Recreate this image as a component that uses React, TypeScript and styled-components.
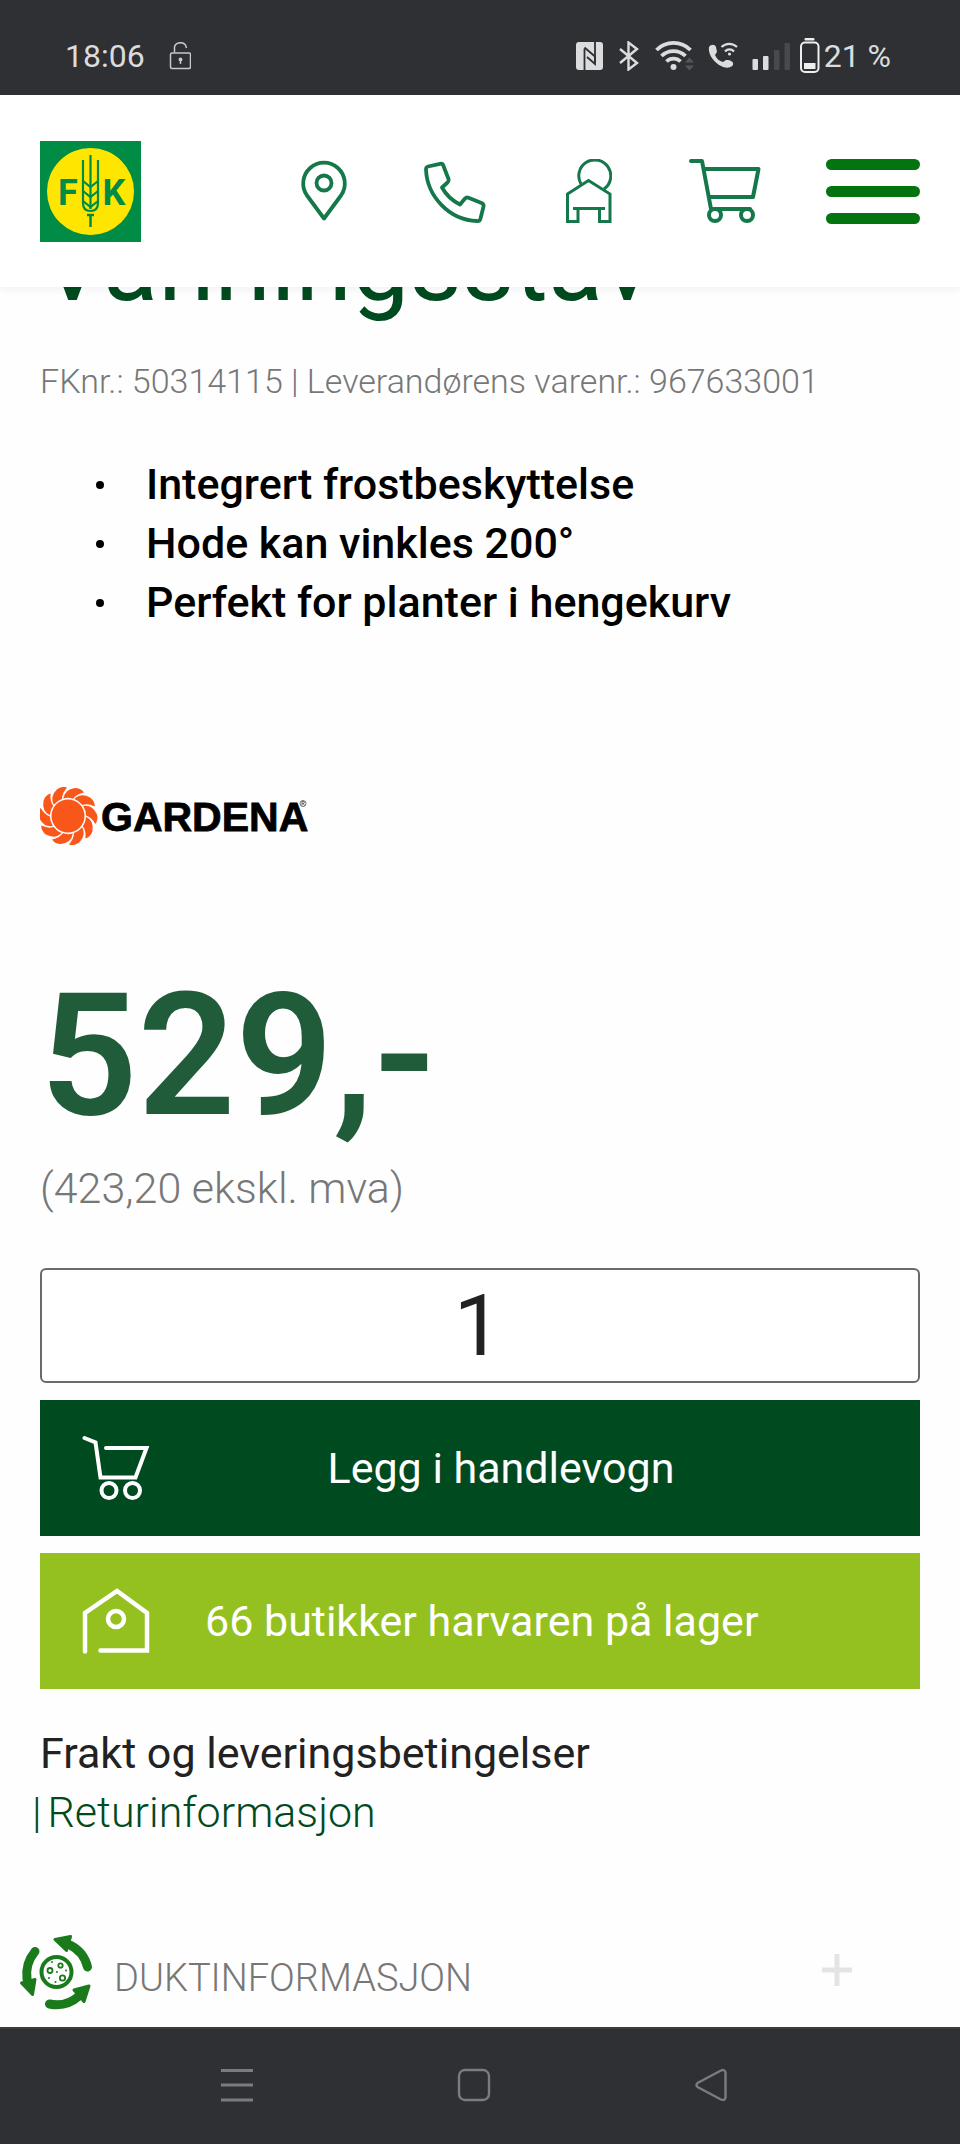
import React from "react";
import styled, { createGlobalStyle } from "styled-components";

const GlobalStyle = createGlobalStyle`
  *, *::before, *::after { box-sizing: border-box; }
  body {
    margin: 0;
    background: #fefefe;
    font-family: Roboto, "Liberation Sans", sans-serif;
    color: #222;
  }
  svg { display: block; flex: none; }
  button { border: 0; padding: 0; background: none; font: inherit; color: inherit; cursor: pointer; }
  a { color: inherit; text-decoration: none; }
`;

const Page = styled.div`
  display: flex;
  flex-direction: column;
  min-height: 100vh;
`;

const StatusBar = styled.div`
  position: relative;
  z-index: 2;
  display: flex;
  align-items: center;
  justify-content: space-between;
  height: 95px;
  padding: 17px 69px 0 65px;
  background: #2f3034;
  color: #dcdcde;
  font-size: 32px;
  line-height: 38px;
`;

const StatusGroup = styled.div<{ $gap: number }>`
  display: flex;
  align-items: center;
  gap: ${(p) => p.$gap}px;
`;

const Battery = styled.div`
  display: flex;
  align-items: center;
  gap: 4px;
  white-space: nowrap;
`;

const Header = styled.header`
  position: relative;
  z-index: 1;
  display: flex;
  align-items: center;
  justify-content: space-between;
  height: 192px;
  padding: 0 40px;
  background: #fff;
  box-shadow: 0 2px 8px rgba(0, 0, 0, 0.06);
`;

const HeaderNav = styled.nav`
  display: flex;
  align-items: center;
  gap: 64px;
`;

const HeaderLinks = styled.div`
  display: flex;
  align-items: center;
  gap: 76px;
`;

const MenuButton = styled.button`
  display: flex;
  flex-direction: column;
  gap: 16px;
  width: 94px;
`;

const MenuBar = styled.span`
  height: 11px;
  border-radius: 6px;
  background: #03740f;
`;

const Main = styled.main`
  flex: 1;
  padding: 0 40px;
`;

/* The heading is scrolled partly under the header. */
const Title = styled.h1`
  margin: -82px 0 0;
  font-size: 102px;
  line-height: 120px;
  font-weight: 400;
  color: #004a1f;
`;

const ProductNumbers = styled.p`
  margin: 36px 0 0;
  font-size: 34px;
  line-height: 40px;
  font-weight: 300;
  color: #777;
`;

const Features = styled.ul`
  margin: 54px 0 0;
  padding: 0 0 0 56px;
  list-style: none;
  font-size: 43px;
  line-height: 59px;
  font-weight: 500;
  color: #000;
`;

const Feature = styled.li`
  display: flex;
  align-items: center;
  gap: 42px;
  &::before {
    content: "";
    width: 8px;
    height: 8px;
    border-radius: 50%;
    background: #000;
  }
`;

const Brand = styled.div`
  margin-top: 155px;
`;

const Price = styled.p`
  margin: 126px 0 0;
  font-size: 171px;
  line-height: 170px;
  font-weight: 600;
  color: #205c3a;
`;

const PriceNote = styled.p`
  margin: 22px 0 0;
  font-size: 43px;
  line-height: 50px;
  font-weight: 300;
  color: #777;
`;

const OrderForm = styled.form`
  display: flex;
  flex-direction: column;
  gap: 17px;
  margin-top: 55px;
`;

const Quantity = styled.input`
  width: 100%;
  height: 115px;
  padding: 0 4px 0 0;
  border: 2px solid #6a6a6a;
  border-radius: 6px;
  background: #fff;
  font-family: inherit;
  font-size: 86px;
  line-height: 100px;
  text-align: center;
  color: #222;
  outline: none;
`;

const ActionButton = styled.button<{ $color: string }>`
  display: flex;
  align-items: center;
  width: 100%;
  height: 136px;
  padding: 0 80px 0 42px;
  background: ${(p) => p.$color};
  color: #fff;
  font-size: 43px;
  line-height: 50px;
`;

const ActionLabel = styled.span<{ $align: "center" | "left" }>`
  flex: 1;
  padding-left: ${(p) => (p.$align === "left" ? 55 : 12)}px;
  text-align: ${(p) => p.$align};
`;

const Links = styled.div`
  display: flex;
  flex-direction: column;
  align-items: flex-start;
  margin-top: 35px;
  font-size: 43px;
  line-height: 59px;
`;

const ReturnRow = styled.div`
  display: flex;
  gap: 6px;
  margin-left: -8px;
  font-weight: 300;
  color: #004a1f;
`;

const Accordion = styled.section`
  display: flex;
  align-items: center;
  gap: 20px;
  margin: 93px 0 16px -22px;
`;

const AccordionToggle = styled.button`
  flex: 1;
  display: flex;
  align-items: center;
  justify-content: space-between;
  padding: 0 68px 7px 0;
  color: #777;
  font-size: 38px;
  line-height: 44px;
  font-weight: 300;
`;

const AccordionTitle = styled.span`
  padding-top: 16px;
`;

const SystemNav = styled.nav`
  display: grid;
  grid-template-columns: repeat(3, 1fr);
  align-items: center;
  height: 117px;
  padding: 0 130px 3px 118px;
  border-top: 2px solid #3b3d35;
  background: #2f3034;
`;

const SystemButton = styled.button`
  display: flex;
  justify-content: center;
`;

const green = "#14784a";
const light = "#dcdcde";

const LockIcon = () => (
  <svg width="22" height="28" viewBox="169 42 22 28" fill="none" stroke="#c8c8ca" strokeWidth="1.5">
    <path d="M174.500 52v-4a6 5 0 0 1 11 -3l1 3" />
    <rect x="170.500" y="53" width="20" height="15.500" rx="1.500" />
    <circle cx="180.500" cy="59.500" r="1.200" fill={light} />
    <path d="M180.500 60v4" />
  </svg>
);

const NfcIcon = () => (
  <svg width="33" height="30" viewBox="576 40 33 30">
    <rect x="576" y="41" width="27" height="28" rx="3" fill={light} />
    <path d="M584.500 69V47.500M595 41V62" fill="none" stroke="#2f3034" strokeWidth="1.800" />
    <path d="M584.500 46.500L595 55.500V63L587 56" fill="none" stroke="#2f3034" strokeWidth="1.800" />
  </svg>
);

const BluetoothIcon = () => (
  <svg width="26" height="30" viewBox="619 40 26 30" fill="none" stroke={light} strokeWidth="2.400">
    <path d="M620 48l17 14l-8.500 6.500v-27l8.500 6.500l-17 14" />
  </svg>
);

const WifiIcon = () => (
  <svg width="43" height="30" viewBox="655 40 43 30" fill="none" stroke={light} strokeWidth="3.800">
    <path d="M656.500 49a24 24 0 0 1 34 0M661.500 55a17 17 0 0 1 24 0M666.500 60.500a10 10 0 0 1 14 0" />
    <circle cx="673.500" cy="66" r="3" fill={light} stroke="none" />
    <path d="M685 61.500l4.500-5l4.500 5zM685 64.500h9l-4.500 5z" fill="#55565a" stroke="none" />
  </svg>
);

const CallIcon = () => (
  <svg width="34" height="30" viewBox="708 40 34 30" fill="none" stroke={light}>
    <path
      d="M709 46c2-3 6-3 7 0l1 5l-2 3c2 4 4 6 8 7l3-2c5 0 8 2 7 5c-3 4-9 3-14 0c-7-5-11-12-10-18z"
      fill={light}
      stroke="none"
    />
    <path d="M721.500 46a11 11 0 0 1 15.500 0M725 50.500a6 6 0 0 1 9 0" strokeWidth="2.200" />
    <circle cx="729.500" cy="53" r="1.600" fill={light} stroke="none" />
  </svg>
);

const SignalIcon = () => (
  <svg width="38" height="30" viewBox="752 40 38 30">
    <rect x="752.500" y="58" width="5.500" height="11" rx="1" fill={light} />
    <rect x="763" y="55" width="5.500" height="14" rx="1" fill={light} />
    <rect x="774" y="49" width="5.500" height="20" rx="1" fill="#48494d" />
    <rect x="784.500" y="42" width="5.500" height="27" rx="1" fill="#48494d" />
  </svg>
);

const BatteryIcon = () => (
  <svg width="20" height="36" viewBox="800 37 20 36">
    <rect x="804.500" y="37" width="10" height="2.500" rx="1" fill="#eee" />
    <rect x="801" y="41.500" width="17.500" height="29.500" rx="4" fill="none" stroke="#eee" strokeWidth="2" />
    <rect x="804" y="62" width="11.500" height="6" fill="#eee" />
  </svg>
);

const FkLogo = () => (
  <svg width="101" height="101" viewBox="0 0 101 101">
    <rect width="101" height="101" fill="#008c44" />
    <circle cx="50.500" cy="50.500" r="43.500" fill="#ffe600" />
    <g fill="#008c44" fontFamily="Roboto, sans-serif" fontWeight="700" fontSize="36">
      <text x="18" y="63.500">F</text>
      <text x="62.500" y="63.500">K</text>
    </g>
    <g fill="none" stroke="#008c44" strokeWidth="2.200">
      <path d="M50.500 14v54M43 19v43q0 8 7.500 8t7.500-8V19" />
      <path d="M43 40l7.500 6l7.500-6M43 50l7.500 6l7.500-6M43 60l7.500 6l7.500-6" />
      <path d="M47 74h7M50.500 74v12" strokeWidth="2.500" />
    </g>
  </svg>
);

const PinIcon = () => (
  <svg width="48" height="64" viewBox="300 159 48 64" fill="none" stroke={green} strokeWidth="3.800" strokeLinejoin="round">
    <path d="M324 218.500L307 195.500A20.800 20.800 0 1 1 341 195.500Z" />
    <circle cx="324" cy="183" r="7.500" />
  </svg>
);

const PhoneIcon = () => (
  <svg width="64" height="64" viewBox="424 159 64 64" fill="none" stroke={green} strokeWidth="3.800" strokeLinejoin="round">
    <path d="M428 166.500L440 163.800Q442.500 163.200 443.300 165.500L448.500 179Q449 181 447.500 182.500L442 187.500Q448 198.500 460 204.500L465 198.500Q466.500 197 468.500 197.800L481.500 203Q484 204 483.500 206.500L480.500 218.500Q480 221.500 477 221C449 220 427 196 426 169.500Q426 167 428 166.500Z" />
  </svg>
);

const BarnIcon = () => (
  <svg width="48" height="64" viewBox="564 159 48 64" fill="none" stroke={green} strokeWidth="3">
    <path d="M581 184A16 16 0 1 1 604 189" />
    <path d="M567.500 194L588.500 180.500L610 194V221.500H599.500V208.500H578V221.500H567.500ZM573 208.500H605" />
  </svg>
);

const CartIcon = () => (
  <svg width="74" height="64" viewBox="688 159 74 64" fill="none" stroke={green} strokeWidth="4" strokeLinecap="round" strokeLinejoin="round">
    <path d="M691 161h11l9 48M704.500 169H758.500L753 197H710M711 209H750" />
    <circle cx="715" cy="215" r="6" />
    <circle cx="747" cy="215" r="6" />
  </svg>
);

const petals = Array.from({ length: 10 }, (_, i) => i * 36);

const GardenaLogo = () => (
  <svg width="270" height="58" viewBox="40 787 270 58" role="img" aria-label="Gardena">
    <g transform="translate(68 816)" fill="#f9561a">
      <circle r="16.500" />
      {petals.map((angle) => (
        <path
          key={angle}
          transform={`rotate(${angle})`}
          d="M-4.800 -17.500Q-3.500 -26.500 7 -28Q13 -28 16 -23.500Q8.500 -22 5.200 -17.300A18 18 0 0 0 -4.800 -17.500Z"
        />
      ))}
    </g>
    <text x="101" y="831" fontFamily="'Liberation Sans', Arial, sans-serif" fontWeight="700" fontSize="41" fill="#000" stroke="#000" strokeWidth="0.800">
      GARDENA
    </text>
    <g fill="none" stroke="#333" strokeWidth="0.700">
      <circle cx="303" cy="803.500" r="3" />
      <path d="M302 805.500v-4h1.300a1 1 0 0 1 0 2h-1.300m1.300 0l1.200 2" />
    </g>
  </svg>
);

const ButtonCartIcon = () => (
  <svg width="68" height="68" viewBox="82 1434 68 68" fill="none" stroke="#fff" strokeWidth="4" strokeLinecap="round">
    <path d="M84.500 1438L95.500 1442.500L100.500 1477.500H135.500L146.500 1448H106" />
    <circle cx="109" cy="1490.500" r="7.500" />
    <circle cx="132.500" cy="1490.500" r="7.500" />
  </svg>
);

const StoreIcon = () => (
  <svg width="68" height="68" viewBox="82 1587 68 68" fill="none" stroke="#fff" strokeWidth="4.500" strokeLinecap="round">
    <path d="M85 1651.500V1613L117 1591L147 1613V1650.500H100.500" />
    <circle cx="116" cy="1619" r="8" />
  </svg>
);

const CookieIcon = () => (
  <svg width="76" height="76" viewBox="18 1935 76 76" fill="#1b7a1b" stroke="#1b7a1b">
    <g fill="none" strokeWidth="9" strokeLinecap="round">
      <path d="M87.500 1967A33 33 0 0 0 70 1945" />
      <path d="M35 1951.500A36 36 0 0 0 27 1979" />
      <path d="M49.500 2004A34 34 0 0 0 79 1996" />
    </g>
    <g strokeWidth="3" strokeLinejoin="round">
      <path d="M55 1939.500L70.500 1936.500L66.500 1950.500Z" />
      <path d="M21.500 1983L35 1979.500L32.500 1994.500Z" />
      <path d="M89 1986L74 1990L84 2001.500Z" />
    </g>
    <circle cx="56.500" cy="1972" r="15" fill="none" strokeWidth="4" />
    <g fill="none" strokeWidth="1.800">
      <circle cx="50" cy="1970.500" r="2.500" />
      <circle cx="60.500" cy="1965.500" r="2.200" />
      <circle cx="62.500" cy="1978" r="2.700" />
    </g>
    <g stroke="none">
      <circle cx="52" cy="1962" r="1" />
      <circle cx="57" cy="1972" r="1" />
      <circle cx="66" cy="1970.500" r="1" />
      <circle cx="49" cy="1978" r="1" />
      <circle cx="55.500" cy="1982" r="1" />
    </g>
  </svg>
);

const PlusIcon = () => (
  <svg width="30" height="32" viewBox="0 0 30 32" fill="none" stroke="#e4e4e4" strokeWidth="5">
    <path d="M15 0V32M0 16H30" />
  </svg>
);

const RecentsIcon = () => (
  <svg width="34" height="34" viewBox="0 0 34 34" fill="none" stroke="#7b7c7f" strokeWidth="3">
    <path d="M1 2.500H33M1 17H33M1 32H33" />
  </svg>
);

const HomeIcon = () => (
  <svg width="34" height="34" viewBox="0 0 34 34" fill="none" stroke="#7b7c7f" strokeWidth="2.400">
    <rect x="2" y="2" width="30" height="30" rx="6" />
  </svg>
);

const BackIcon = () => (
  <svg width="34" height="34" viewBox="0 0 34 34" fill="none" stroke="#7b7c7f" strokeWidth="2.400" strokeLinejoin="round">
    <path d="M3.500 15Q1.500 17 3.500 19L27 31.500Q31 33 31.500 29.500V4.500Q31 1 27 2.500Z" />
  </svg>
);

export default function App() {
  return (
    <Page>
      <GlobalStyle />
      <StatusBar>
        <StatusGroup $gap={24}>
          <span>18:06</span>
          <LockIcon />
        </StatusGroup>
        <StatusGroup $gap={10}>
          <NfcIcon />
          <BluetoothIcon />
          <WifiIcon />
          <CallIcon />
          <SignalIcon />
          <Battery>
            <BatteryIcon />
            21 %
          </Battery>
        </StatusGroup>
      </StatusBar>

      <Header>
        <a href="#hjem" aria-label="Felleskjøpet">
          <FkLogo />
        </a>
        <HeaderNav>
          <HeaderLinks>
            <a href="#butikker" aria-label="Butikker"><PinIcon /></a>
            <a href="#kontakt" aria-label="Kontakt"><PhoneIcon /></a>
            <a href="#min-side" aria-label="Min side"><BarnIcon /></a>
            <a href="#handlevogn" aria-label="Handlevogn"><CartIcon /></a>
          </HeaderLinks>
          <MenuButton type="button" aria-label="Meny">
            <MenuBar />
            <MenuBar />
            <MenuBar />
          </MenuButton>
        </HeaderNav>
      </Header>

      <Main>
        <Title>Vanningsstav</Title>
        <ProductNumbers>FKnr.: 50314115 | Leverandørens varenr.: 967633001</ProductNumbers>
        <Features>
          <Feature>Integrert frostbeskyttelse</Feature>
          <Feature>Hode kan vinkles 200°</Feature>
          <Feature>Perfekt for planter i hengekurv</Feature>
        </Features>
        <Brand>
          <GardenaLogo />
        </Brand>
        <Price>529,-</Price>
        <PriceNote>(423,20 ekskl. mva)</PriceNote>
        <OrderForm onSubmit={(e) => e.preventDefault()}>
          <Quantity type="text" inputMode="numeric" aria-label="Antall" defaultValue="1" />
          <ActionButton type="submit" $color="#004a1f">
            <ButtonCartIcon />
            <ActionLabel $align="center">Legg i handlevogn</ActionLabel>
          </ActionButton>
          <ActionButton type="button" $color="#94c11f">
            <StoreIcon />
            <ActionLabel $align="left">66 butikker harvaren på lager</ActionLabel>
          </ActionButton>
        </OrderForm>
        <Links>
          <a href="#frakt">Frakt og leveringsbetingelser</a>
          <ReturnRow>
            <span>|</span>
            <a href="#retur">Returinformasjon</a>
          </ReturnRow>
        </Links>
        <Accordion>
          <button type="button" aria-label="Informasjonskapsler">
            <CookieIcon />
          </button>
          <AccordionToggle type="button" aria-expanded="false">
            <AccordionTitle>DUKTINFORMASJON</AccordionTitle>
            <PlusIcon />
          </AccordionToggle>
        </Accordion>
      </Main>

      <SystemNav>
        <SystemButton type="button" aria-label="Nylige apper"><RecentsIcon /></SystemButton>
        <SystemButton type="button" aria-label="Hjem"><HomeIcon /></SystemButton>
        <SystemButton type="button" aria-label="Tilbake"><BackIcon /></SystemButton>
      </SystemNav>
    </Page>
  );
}
